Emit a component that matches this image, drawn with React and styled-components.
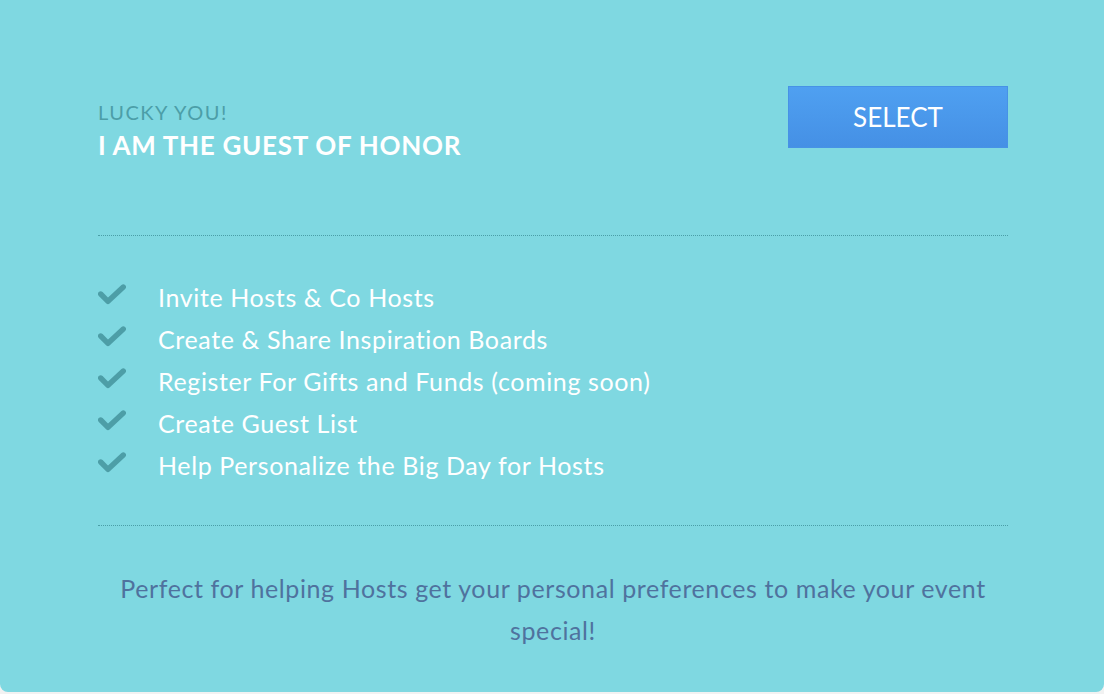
import React from "react";
import styled, { createGlobalStyle } from "styled-components";

const Global = createGlobalStyle`
  html, body { margin: 0; padding: 0; background: #f2f2f2; }
  body { font-family: "Lato", "Open Sans", sans-serif; }
`;

const Card = styled.div`
  width: 1104px;
  height: 692px;
  box-sizing: border-box;
  background: #7fd8e1;
  border-radius: 0 0 8px 8px;
  padding: 86px 96px 0 98px;
`;

const Header = styled.div`
  display: flex;
  justify-content: space-between;
  align-items: flex-start;
  height: 149px;
  border-bottom: 1px dotted #4a9ea7;
`;

const Titles = styled.div`
  display: flex;
  flex-direction: column;
  padding-top: 14px;
`;

const Eyebrow = styled.div`
  font-size: 20px;
  line-height: 24px;
  color: #4c9ea8;
  letter-spacing: 1.5px;
`;

const Title = styled.div`
  font-size: 26px;
  line-height: 34px;
  margin-top: 4px;
  font-weight: 700;
  color: #ffffff;
  letter-spacing: 0.7px;
`;

const SelectButton = styled.button`
  width: 220px;
  height: 62px;
  border: 1px solid #4792e6;
  background: linear-gradient(#4fa0f1, #4590e5);
  color: #ffffff;
  font-family: inherit;
  font-size: 26px;
  letter-spacing: 0;
  cursor: pointer;
  padding: 0;
`;

const List = styled.ul`
  list-style: none;
  margin: 0;
  padding: 40px 0 39px;
  border-bottom: 1px dotted #4a9ea7;
`;

const Item = styled.li`
  display: flex;
  align-items: center;
  height: 42px;
  font-size: 25px;
  color: #ffffff;
  letter-spacing: 0.62px;
`;

const Check = styled.svg`
  width: 28px;
  height: 22px;
  margin-right: 32px;
  margin-top: -4px;
  flex: none;
`;

const Footer = styled.p`
  margin: 0;
  padding: 41px 20px 0;
  text-align: center;
  font-size: 25px;
  line-height: 42px;
  color: #4f729e;
  letter-spacing: 0.6px;
`;

const items = [
  "Invite Hosts & Co Hosts",
  "Create & Share Inspiration Boards",
  "Register For Gifts and Funds (coming soon)",
  "Create Guest List",
  "Help Personalize the Big Day for Hosts",
];

const CheckIcon = () => (
  <Check viewBox="0 0 28 22">
    <polyline
      points="2.7,10 10,17.3 25.3,3"
      fill="none"
      stroke="#4d9ea7"
      strokeWidth="5.4"
      strokeLinecap="round"
      strokeLinejoin="round"
    />
  </Check>
);

export default function App() {
  return (
    <>
      <Global />
      <Card>
        <Header>
          <Titles>
            <Eyebrow>LUCKY YOU!</Eyebrow>
            <Title>I AM THE GUEST OF HONOR</Title>
          </Titles>
          <SelectButton>SELECT</SelectButton>
        </Header>
        <List>
          {items.map((t) => (
            <Item key={t}>
              <CheckIcon />
              {t}
            </Item>
          ))}
        </List>
        <Footer>
          Perfect for helping Hosts get your personal preferences to make your event special!
        </Footer>
      </Card>
    </>
  );
}
